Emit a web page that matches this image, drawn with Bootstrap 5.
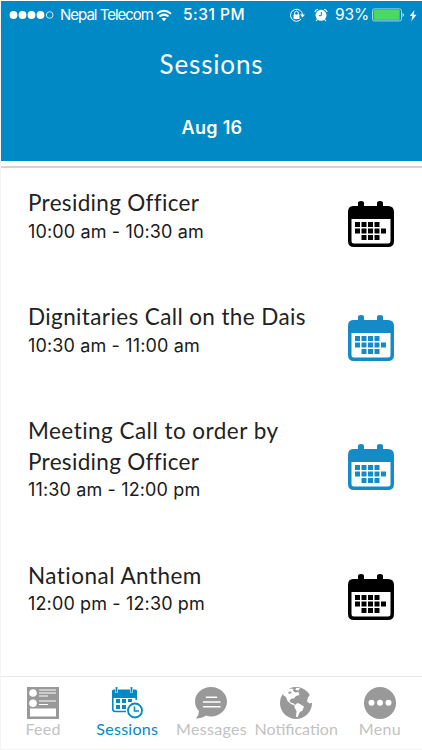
<!DOCTYPE html>
<html lang="en">
<head>
<meta charset="utf-8">
<meta name="viewport" content="width=device-width, initial-scale=1">
<title>Sessions</title>
<link href="https://cdn.jsdelivr.net/npm/bootstrap@5.3.0/dist/css/bootstrap.min.css" rel="stylesheet">
<style>
  :root { --brand: #0089c5; }
  body { font-family: Lato, sans-serif; background: #fff; color: #222; overflow: hidden; }
  .screen { height: 750px; padding: 1px 0 0 1px; background: linear-gradient(to right, #f4f4f4 1px, #fff 1px); }
  .top { height: 160px; background: var(--brand); color: #fff; }
  .status { height: 28px; font: 16px/28px Inter, sans-serif; padding-left: 8px; padding-right: 5px; }
  .carrier { font-size: 15px; letter-spacing: -1px; margin-left: 5px; }
  .wifi { margin-left: 3px; }
  .clock { font-weight: 500; font-size: 15.5px; letter-spacing: .5px; margin-left: 11px; }
  .percent { font-size: 15.5px; letter-spacing: -.1px; margin: 0 3px 0 7px; }
  .title { font-size: 26px; line-height: 36px; margin-top: 17px; letter-spacing: .85px; }
  .day { font: 600 18px/24px Inter, sans-serif; margin-top: 34px; letter-spacing: .3px; padding-left: 1px; }
  .rule { height: 2px; margin-top: 5px; background: #d4d4d4; margin-bottom: -1px; }
  .session { padding: 21px 27px 38px; }
  .name { font-size: 22.5px; line-height: 30.5px; letter-spacing: .38px; }
  .name.tight { letter-spacing: .32px; }
  .name.loose { letter-spacing: .47px; }
  .time { font: 18px/24.5px Inter, sans-serif; color: #1a1a1a; letter-spacing: .14px; padding-top: 1px; margin-bottom: -1px; }
  .cal { margin-top: -16px; margin-bottom: -33px; }
  .tabs { height: 74px; border-top: 1px solid #e9e9e9; border-bottom: 1px solid #f4f4f4; }
  .tab { width: 84.4px; padding-top: 9px; color: #c2c2c2; font-size: 16px; line-height: 20px; letter-spacing: .3px; white-space: nowrap; }
  .tab svg { color: #999; }
  .tab.wide { letter-spacing: 0; padding-left: 1px; }
  .tab.current, .tab.current svg { color: var(--brand); }
</style>
</head>
<body>
<svg class="d-none">
  <symbol id="calendar" viewBox="0 0 48 48">
    <path fill="currentColor" fill-rule="evenodd" d="M6 6H11V3Q11 1 14 1T17 3V6H30V3Q30 1 33 1T36 3V6H41Q47 6 47 12V41Q47 47 41 47H7Q1 47 1 41V12Q1 6 6 6ZM4.500 19V41Q4.500 43.500 7 43.500H41Q43.500 43.500 43.500 41V19Z"/>
    <path fill="currentColor" d="M8 22h5v5H8zm6.500 0h5v5h-5zm6.500 0h5v5h-5zm6.500 0h5v5h-5zM8 28.500h5v5H8zm6.500 0h5v5h-5zm6.500 0h5v5h-5zm6.500 0h5v5h-5zm6.500 0h5v5h-5zM14.500 35h5v5h-5zm6.500 0h5v5h-5zm6.500 0h5v5h-5z"/>
  </symbol>
</svg>
<div class="screen d-flex flex-column">
  <header class="top flex-shrink-0">
    <div class="status d-flex align-items-center">
      <svg width="46" height="10" viewBox="0 0 46 10" fill="#fff"><circle cx="4.500" cy="5" r="3.900"/><circle cx="13.500" cy="5" r="3.900"/><circle cx="22.500" cy="5" r="3.900"/><circle cx="31.500" cy="5" r="3.900"/><circle cx="40.700" cy="5" r="3.300" fill="none" stroke="#fff" stroke-width=".8"/></svg>
      <span class="carrier">Nepal Telecom</span>
      <svg class="wifi" width="16" height="13" viewBox="0 0 16 13" fill="none" stroke="#fff" stroke-width="2"><path d="M1 4.800Q8-1.200 15 4.800M3.500 7.500Q8 3.800 12.500 7.500"/><path d="M5.500 9.500Q8 7.800 10.500 9.500L8 12.300Z" fill="#fff" stroke="none"/></svg>
      <span class="clock">5:31 PM</span>
      <svg class="ms-auto" width="17" height="15" viewBox="0 0 17 15" fill="none" stroke="#fff" stroke-width="1"><path d="M12.200 11A6 6 0 1 1 13.500 7"/><path d="M11 6.500h5l-2.500 3z" fill="#fff" stroke="none"/><path d="M4.500 6.500h6v4.500h-6z" fill="#fff" stroke="none"/><path d="M5.700 7V5a1.800 1.800 0 0 1 3.600 0v2"/></svg>
      <svg class="ms-2" width="14" height="14" viewBox="0 0 14 14"><circle cx="7" cy="7.300" r="5.500" fill="#fff"/><path d="M.8 4Q1.500 1.700 4 1.200M13.200 4Q12.500 1.700 10 1.200M3.200 11.500L2 13M10.800 11.500L12 13" stroke="#fff" stroke-width="1.100" fill="none"/><path d="M7.300 4v3.700H4.800" stroke="#0089c5" stroke-width="1" fill="none"/></svg>
      <span class="percent">93%</span>
      <svg width="33" height="14" viewBox="0 0 33 14"><rect x=".5" y=".9" width="29" height="12" rx="1.800" fill="none" stroke="#a6d5eb"/><rect x="1.600" y="2" width="26" height="9.800" fill="#4bd964"/><path d="M30.700 4.800q2.200 2.200 0 4.400z" fill="#fff"/></svg>
      <svg class="ms-1" width="8" height="13" viewBox="0 0 8 13"><path d="M5.500 1L.7 7h2.700L2.300 12.300 7.500 5.800H4.600z" fill="#fff"/></svg>
    </div>
    <h1 class="title text-center fw-normal mb-0">Sessions</h1>
    <div class="day text-center">Aug 16</div>
  </header>
  <div class="rule flex-shrink-0"></div>
  <main class="flex-grow-1">
    <article class="session d-flex justify-content-between align-items-center"><div><div class="name tight">Presiding Officer</div><div class="time">10:00 am - 10:30 am</div></div><svg class="cal text-black" width="48" height="48"><use href="#calendar"/></svg></article>
    <article class="session d-flex justify-content-between align-items-center"><div><div class="name">Dignitaries Call on the Dais</div><div class="time">10:30 am - 11:00 am</div></div><svg class="cal" color="#148bc6" width="48" height="48"><use href="#calendar"/></svg></article>
    <article class="session d-flex justify-content-between align-items-center"><div><div class="name loose">Meeting Call to order by</div><div class="name tight">Presiding Officer</div><div class="time">11:30 am - 12:00 pm</div></div><svg class="cal" color="#148bc6" width="48" height="48"><use href="#calendar"/></svg></article>
    <article class="session d-flex justify-content-between align-items-center"><div><div class="name loose">National Anthem</div><div class="time">12:00 pm - 12:30 pm</div></div><svg class="cal text-black" width="48" height="48"><use href="#calendar"/></svg></article>
  </main>
  <nav class="tabs d-flex flex-shrink-0">
    <div class="tab d-flex flex-column align-items-center">
      <svg width="32" height="33" viewBox="0 0 32 33"><path d="M0 1h32v32H0z" fill="currentColor"/><g fill="#fff"><circle cx="6" cy="7" r="3.800"/><circle cx="6" cy="17.300" r="3.800"/><path d="M3 22.500h26v8H3z"/></g><path d="M12 4h17M12 7h17M12 10h9M12 15h17M12 18.500h9" stroke="#fff" stroke-width="1.200"/></svg>
      <span>Feed</span></div>
    <div class="tab current d-flex flex-column align-items-center">
      <svg width="32" height="33" viewBox="0 0 32 33"><path d="M1 12V5q0-1.500 1.500-1.500H4V6.500h3V3.500h12V6.500h3V3.500h2.500Q26 3.500 26 5v7z" fill="currentColor"/><path d="M5.500 1v5M20.500 1v5" stroke="currentColor" stroke-width="1.800"/><path d="M1.800 10v13q0 2.500 2.500 2.500H15M25.200 10v4" fill="none" stroke="currentColor" stroke-width="1.600"/><path d="M5 13h4v4H5zm6 0h4v4h-4zm6 0h4v3h-4zM5 19h4v4H5zm6 0h4v4h-4z" fill="currentColor"/><circle cx="24" cy="24.500" r="7" fill="#fff" stroke="currentColor" stroke-width="1.800"/><path d="M23.500 20.500v4.500H28" fill="none" stroke="currentColor" stroke-width="1.600"/></svg>
      <span>Sessions</span></div>
    <div class="tab d-flex flex-column align-items-center">
      <svg width="32" height="33" viewBox="0 0 32 33"><path d="M16 1C25 1 32 7.500 32 15.500S25 30.500 16 30.500Q13 30.500 11 29.500Q7 32.500 1 32.500Q4 29 4 25Q0 21 0 15.500C0 7.500 7 1 16 1Z" fill="currentColor"/><path d="M11.500 11.300h10M8.500 16h16.500M8.500 20.700h16.500" stroke="#fff" stroke-width="1.600" stroke-linecap="round"/></svg>
      <span>Messages</span></div>
    <div class="tab wide d-flex flex-column align-items-center">
      <svg width="32" height="33" viewBox="0 0 32 33"><circle cx="16" cy="17" r="16" fill="currentColor"/><path fill="#fff" d="M3.500 6.500L7 3.500 10 2.500 13.500 3 13 5 15.500 6.500 18.500 6 19.500 9 16 10 14 12.500 11.500 12.500 9.500 14.500 10.500 16.500 13 17 15 19 17.500 17 20 18 24 20.500 22.500 24.500 19.500 26.500 17.500 31.500 16 30.500 16.500 25 14.500 21.500 14.500 19.500 11 18 7.500 15 6 11 3 9ZM16 2L20 2 18.500 4.500 15.500 4ZM30 8.500L28 11.500 27 15.500 29.500 17.500 32.500 16.500 32.500 12Z"/><path d="M9 5.500l3 .5-2 2-2-1z" fill="currentColor"/></svg>
      <span>Notification</span></div>
    <div class="tab d-flex flex-column align-items-center">
      <svg width="32" height="33" viewBox="0 0 32 33"><circle cx="16" cy="17" r="16" fill="currentColor"/><g fill="#fff"><circle cx="7.500" cy="16.700" r="3"/><circle cx="16" cy="16.700" r="3"/><circle cx="24.500" cy="16.700" r="3"/></g></svg>
      <span>Menu</span></div>
  </nav>
</div>
<script src="https://cdn.jsdelivr.net/npm/bootstrap@5.3.0/dist/js/bootstrap.bundle.min.js"></script>
</body>
</html>
